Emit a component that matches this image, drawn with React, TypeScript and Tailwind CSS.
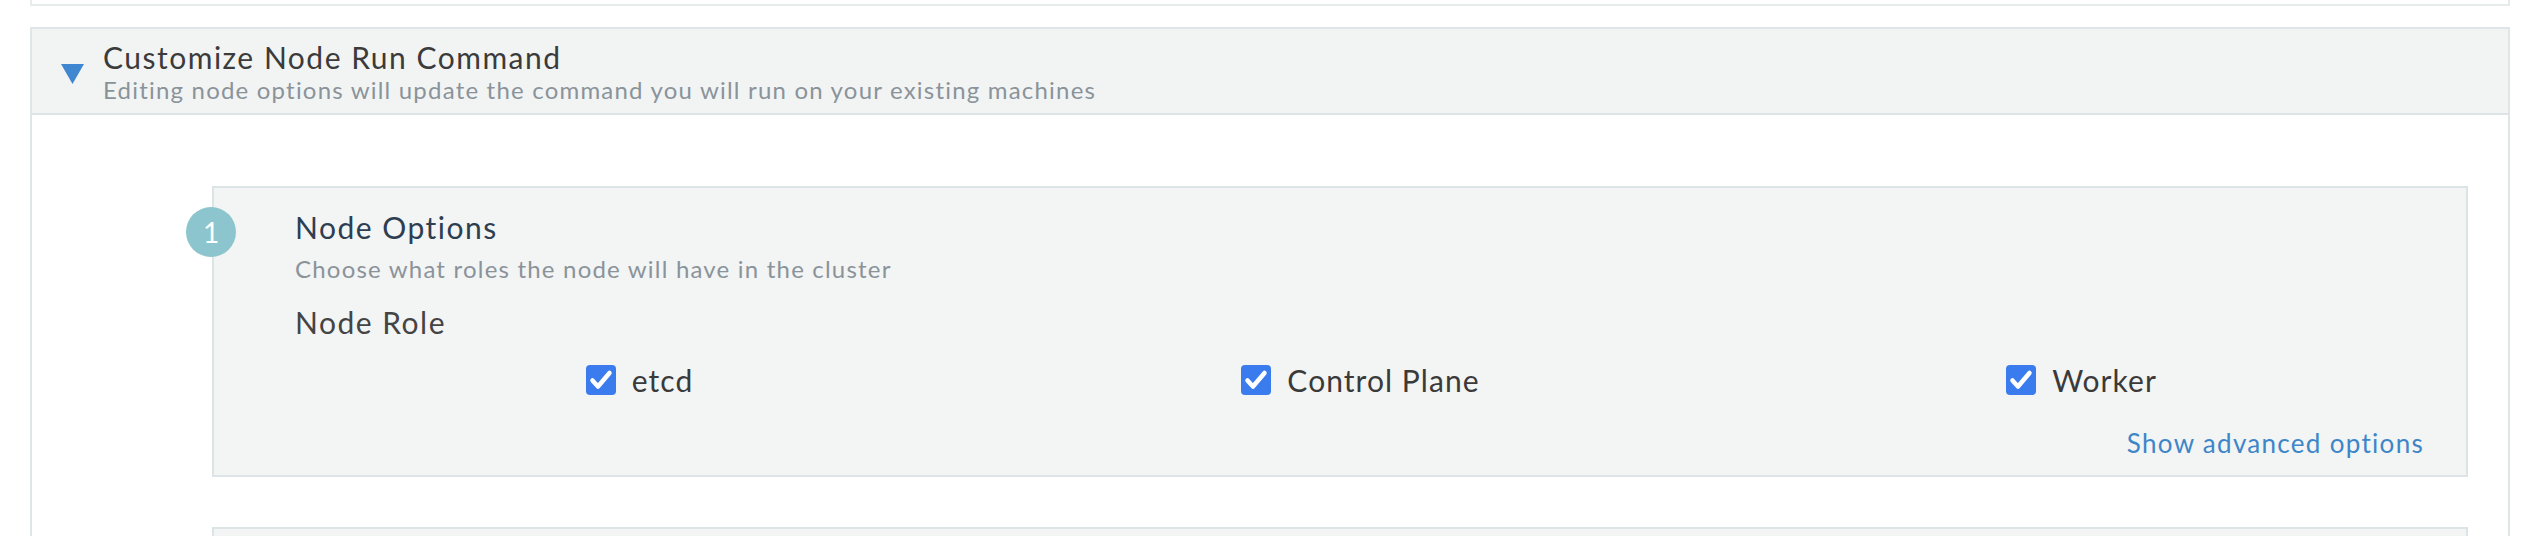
import React from "react";

const font = { fontFamily: "Lato, 'Open Sans', sans-serif" };

function Check({ label }: { label: string }) {
  return (
    <label className="flex items-center gap-[16px] h-[40px]">
      <span className="w-[30px] h-[30px] rounded-[4px] bg-[#3a7cee] flex items-center justify-center">
        <svg width="30" height="30" viewBox="0 0 30 30">
          <path d="M6.5 15.5 L12 21.5 L23.5 8" fill="none" stroke="#fff" strokeWidth="4.5" strokeLinecap="round" strokeLinejoin="round" />
        </svg>
      </span>
      <span className="text-[30px] leading-[40px] text-[#3a3a3a] tracking-[0.035em]">{label}</span>
    </label>
  );
}

export default function App() {
  return (
    <div className="w-full h-[536px] overflow-hidden bg-white" style={font}>
      <div className="ml-[30px] mr-[22px]">
        {/* tail of the section above */}
        <div className="h-[6px] border-x-2 border-b-2 border-[#e6ebec]" />

        <div className="mt-[21px] border-2 border-[#e0e6e8] h-[520px]">
          <div className="bg-[#f2f4f4] border-b-2 border-[#dde4e6] flex items-center pl-[29px] pt-[11px] pb-[9px]">
            <svg width="23" height="20" viewBox="0 0 23 20" className="shrink-0 mt-[4px]">
              <polygon points="0,0 23,0 11.5,20" fill="#3f87d0" />
            </svg>
            <div className="ml-[19px]">
              <div className="text-[30px] leading-[34px] text-[#3b3b3b] tracking-[0.05em]">
                Customize Node Run Command
              </div>
              <div className="mt-[2px] text-[24px] leading-[28px] text-[#8a939a] tracking-[0.05em]">
                Editing node options will update the command you will run on your existing machines
              </div>
            </div>
          </div>

          <div className="pt-[71px] pl-[180px] pr-[40px]">
            <div className="relative border-2 border-[#dde4e6] bg-[#f3f4f4] h-[291px] pl-[81px] pr-[42px] pt-[22px]">
              <div className="absolute left-[-28px] top-[19px] w-[50px] h-[50px] rounded-full bg-[#8cc5cd] flex items-center justify-center text-white text-[28px]">
                1
              </div>
              <div className="text-[30px] leading-[34px] text-[#2d3e52] tracking-[0.05em]">Node Options</div>
              <div className="mt-[11px] text-[24px] leading-[28px] text-[#8a939a] tracking-[0.05em]">
                Choose what roles the node will have in the cluster
              </div>
              <div className="mt-[22px] text-[30px] leading-[34px] text-[#444] tracking-[0.05em]">Node Role</div>
              <div className="mt-[21px] ml-[-16px] mr-[-18px] grid grid-cols-3 justify-items-center">
                <Check label="etcd" />
                <Check label="Control Plane" />
                <Check label="Worker" />
              </div>
              <div className="mt-[27px] text-right text-[26px] leading-[32px] text-[#3d86c8] tracking-[0.05em]">
                Show advanced options
              </div>
            </div>
            <div className="mt-[50px] border-2 border-[#dde4e6] bg-[#f3f4f4] h-[120px]" />
          </div>
        </div>
      </div>
    </div>
  );
}
